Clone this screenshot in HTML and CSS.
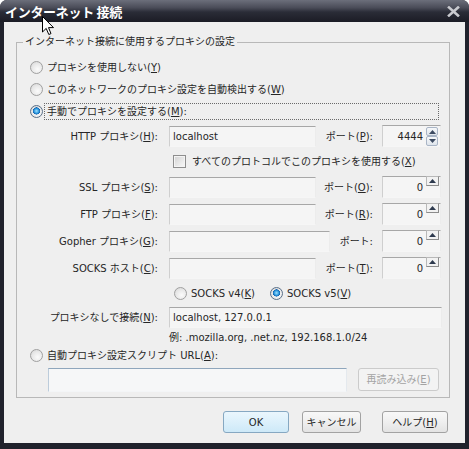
FILE: index.html
```html
<!DOCTYPE html>
<html lang="ja">
<head>
<meta charset="utf-8">
<title>インターネット 接続</title>
<link rel="stylesheet" href="styles.css">
</head>
<body>
<div class="window">
  <div class="titlebar">
    <span class="title">インターネット 接続</span>
    <span class="close">
      <svg width="13" height="11" viewBox="0 0 13 11"><path d="M2 1.5 L11 9.5 M11 1.5 L2 9.5" stroke="#c9cacf" stroke-width="2.6" stroke-linecap="square" fill="none"/></svg>
    </span>
  </div>
  <div class="client">
    <fieldset class="group">
      <legend>インターネット接続に使用するプロキシの設定</legend>

      <div class="line opt"><span class="radio"></span><span class="optlabel">プロキシを使用しない(<u>Y</u>)</span></div>
      <div class="line opt"><span class="radio"></span><span class="optlabel">このネットワークのプロキシ設定を自動検出する(<u>W</u>)</span></div>
      <div class="line opt"><span class="radio on"></span><span class="optlabel focus">手動でプロキシを設定する(<u>M</u>):</span></div>

      <div class="line prow h-http">
        <span class="plabel">HTTP プロキシ(<u>H</u>):</span>
        <div class="mid"><span class="field w147">localhost</span><span class="portlabel">ポート(<u>P</u>):</span></div>
        <div class="port"><span class="val">4444</span><span class="spin"><span class="sb up"><svg width="7" height="4" viewBox="0 0 7 4"><path d="M0 4 L3.5 0 L7 4 Z" fill="#3d4b62"/></svg></span><span class="sb down"><svg width="7" height="4" viewBox="0 0 7 4"><path d="M0 0 L3.5 4 L7 0 Z" fill="#3d4b62"/></svg></span></span></div>
      </div>

      <div class="line h-check">
        <span class="checkbox"></span><span>すべてのプロトコルでこのプロキシを使用する(<u>X</u>)</span>
      </div>

      <div class="line prow h28">
        <span class="plabel">SSL プロキシ(<u>S</u>):</span>
        <div class="mid"><span class="field w147"></span><span class="portlabel">ポート(<u>O</u>):</span></div>
        <div class="port"><span class="val">0</span><span class="sb single"><svg width="7" height="4" viewBox="0 0 7 4"><path d="M0 4 L3.5 0 L7 4 Z" fill="#2e3a4e"/></svg></span></div>
      </div>

      <div class="line prow h26">
        <span class="plabel">FTP プロキシ(<u>F</u>):</span>
        <div class="mid"><span class="field w147"></span><span class="portlabel">ポート(<u>R</u>):</span></div>
        <div class="port"><span class="val">0</span><span class="sb single"><svg width="7" height="4" viewBox="0 0 7 4"><path d="M0 4 L3.5 0 L7 4 Z" fill="#2e3a4e"/></svg></span></div>
      </div>

      <div class="line prow h28">
        <span class="plabel">Gopher プロキシ(<u>G</u>):</span>
        <div class="mid"><span class="field w161"></span><span class="portlabel">ポート:</span></div>
        <div class="port"><span class="val">0</span><span class="sb single"><svg width="7" height="4" viewBox="0 0 7 4"><path d="M0 4 L3.5 0 L7 4 Z" fill="#2e3a4e"/></svg></span></div>
      </div>

      <div class="line prow h26">
        <span class="plabel">SOCKS ホスト(<u>C</u>):</span>
        <div class="mid"><span class="field w147"></span><span class="portlabel">ポート(<u>T</u>):</span></div>
        <div class="port"><span class="val">0</span><span class="sb single"><svg width="7" height="4" viewBox="0 0 7 4"><path d="M0 4 L3.5 0 L7 4 Z" fill="#2e3a4e"/></svg></span></div>
      </div>

      <div class="line h-socks">
        <span class="radio"></span><span class="optlabel">SOCKS v4(<u>K</u>)</span>
        <span class="radio v5 on"></span><span class="optlabel">SOCKS v5(<u>V</u>)</span>
      </div>

      <div class="line prow h22">
        <span class="plabel">プロキシなしで接続(<u>N</u>):</span>
        <span class="field wide">localhost, 127.0.0.1</span>
      </div>

      <div class="line h18 example">例: .mozilla.org, .net.nz, 192.168.1.0/24</div>

      <div class="line opt h18"><span class="radio"></span><span class="optlabel">自動プロキシ設定スクリプト URL(<u>A</u>):</span></div>

      <div class="line urlrow">
        <span class="field url"></span>
        <span class="btn disabled reload">再読み込み(<u>E</u>)</span>
      </div>
    </fieldset>

    <div class="buttons">
      <span class="btn default ok">OK</span>
      <span class="btn cancel">キャンセル</span>
      <span class="btn help">ヘルプ(<u>H</u>)</span>
    </div>
  </div>
  <svg class="cursor" width="13" height="20" viewBox="0 0 13 20"><path d="M0.5 0.5 L0.5 16 L4.2 12.4 L6.8 18.5 L9 17.6 L6.5 11.6 L11.5 11.6 Z" fill="#fff" stroke="#000" stroke-width="1" stroke-linejoin="miter"/></svg>
</div>
</body>
</html>
```

FILE: styles.css
```css
* { box-sizing: border-box; }
html, body { margin: 0; padding: 0; background: #ffffff; }
body {
  font-family: "DejaVu Sans", "Noto Sans CJK JP", sans-serif;
  font-size: 10px;
  line-height: 13px;
  color: #262626;
}
u { text-underline-offset: 1px; }

.window {
  position: relative;
  width: 469px;
  height: 449px;
  background: #20222c;
  border-radius: 7px 7px 0 0;
  display: flex;
  flex-direction: column;
  overflow: hidden;
}
.titlebar {
  height: 22px;
  flex: none;
  display: flex;
  align-items: center;
  justify-content: space-between;
  padding: 1px 9px 0 5px;
  background: linear-gradient(#6c6f7b 0%, #4a4c58 35%, #2a2c37 55%, #1b1c25 100%);
}
.title {
  color: #ffffff;
  font-family: "Noto Sans CJK JP", sans-serif;
  font-weight: bold;
  font-size: 13px;
  line-height: 16px;
  letter-spacing: -0.3px;
}
.close { display: flex; }

.client {
  flex: 1;
  margin: 0 4px 6px 4px;
  background: #efefef;
  display: flex;
  flex-direction: column;
}

.group {
  margin: 13px 15px 0 12px;
  padding: 7px 0 5px 0;
  border: 1px solid #b8b8b8;
  min-width: 0;
}
.group legend {
  margin-left: 6px;
  padding: 0 2px;
  line-height: 14px;
}

.line { display: flex; align-items: center; }
.opt { height: 22px; padding-left: 13px; }
.h18 { height: 18px; }
.h22 { height: 22px; }
.h26 { height: 26px; }
.h28 { height: 28px; }
.h-http { height: 28px; }
.h-check { height: 23px; padding-left: 156px; }
.h-socks { height: 25px; padding-left: 157px; }
.example { padding-left: 152px; }
.urlrow { height: 28px; padding: 4px 0 0 31px; align-items: flex-start; }

.radio {
  flex: none;
  width: 13px;
  height: 13px;
  border-radius: 50%;
  border: 1px solid #a0a0a0;
  background: radial-gradient(circle at 60% 65%, #fbfbfb 0%, #e8e8e8 55%, #d2d2d2 100%);
}
.radio.on {
  border-color: #5a6f88;
  background:
    radial-gradient(circle at 50% 45%, #9fe0ff 0%, #2f9be0 28%, #1463b0 42%, transparent 46%),
    radial-gradient(circle at 60% 65%, #fbfbfb 0%, #e6e6e6 60%, #cfcfcf 100%);
}
.radio.v5 { margin-left: 15px; }
.optlabel { margin-left: 4px; }
.focus {
  flex: 1;
  margin-left: 1px;
  margin-right: 10px;
  height: 17px;
  padding-left: 2px;
  border: 1px dotted #6a6a6a;
  display: flex;
  align-items: center;
}

.checkbox {
  flex: none;
  width: 13px;
  height: 13px;
  margin-right: 6px;
  border: 1px solid #8e8e8e;
  background: linear-gradient(135deg, #d2d2d2, #eeeeee 70%, #f7f7f7);
  box-shadow: inset 0 0 0 1px #f4f4f4;
}

.plabel {
  flex: none;
  width: 141px;
  margin-right: 11px;
  text-align: right;
  white-space: nowrap;
}
.mid {
  flex: none;
  width: 204px;
  display: flex;
  align-items: center;
}
.field {
  flex: none;
  height: 21px;
  border: 1px solid;
  border-color: #a7a7a7 #ececec #f6f6f6 #cfcfcf;
  background: #f5f5f5;
  padding: 0 3px;
  display: flex;
  align-items: center;
  white-space: nowrap;
}
.w147 { width: 147px; }
.w161 { width: 161px; }
.wide { width: 273px; }
.url {
  width: 299px;
  height: 24px;
  border-color: #8fa6bc #e4e9ee #f3f5f7 #bcccdb;
  background: #f6f7f8;
}
.portlabel {
  flex: 1;
  text-align: right;
  white-space: nowrap;
}
.port {
  flex: none;
  width: 59px;
  height: 22px;
  margin-left: 9px;
  border: 1px solid;
  border-color: #a7a7a7 #ececec #f6f6f6 #cfcfcf;
  background: #f5f5f5;
  display: grid;
  grid-template-columns: 1fr 13px;
  align-items: start;
  padding: 0 1px 0 0;
}
.val {
  text-align: right;
  padding-right: 3px;
  line-height: 20px;
  padding-top: 1px;
}
.spin {
  display: flex;
  flex-direction: column;
  margin-top: 1px;
}
.sb {
  width: 12px;
  height: 9px;
  border: 1px solid #a9b5c6;
  border-radius: 2px;
  background: linear-gradient(#f6f8fa, #dfe5ec);
  display: flex;
  align-items: center;
  justify-content: center;
}
.sb.down { height: 10px; }
.sb.single {
  width: 13px;
  height: 10px;
  margin-top: -1px;
  border-color: #b8b8b8 #8c8c8c #8c8c8c #b8b8b8;
  border-radius: 0;
  background: #f2f2f2;
}

.btn {
  flex: none;
  height: 22px;
  border: 1px solid #a2a2a2;
  border-radius: 3px;
  background: linear-gradient(#f8f8f8, #efefef 50%, #e3e3e3);
  display: flex;
  align-items: center;
  justify-content: center;
  white-space: nowrap;
}
.btn.disabled {
  color: #a3a3a3;
  border-color: #cbcbcb;
  background: #f3f3f3;
}
.reload { width: 81px; height: 23px; margin-left: 11px; }
.buttons {
  display: flex;
  justify-content: flex-end;
  margin: 13px 17px 0 0;
}
.ok {
  width: 66px;
  border-color: #86a8c2;
  background: linear-gradient(#eaf6fd, #dcf0fb 50%, #cde9f8);
}
.cancel { width: 59px; margin-left: 13px; }
.help { width: 66px; margin-left: 21px; }

.cursor {
  position: absolute;
  left: 42px;
  top: 16px;
}
```
